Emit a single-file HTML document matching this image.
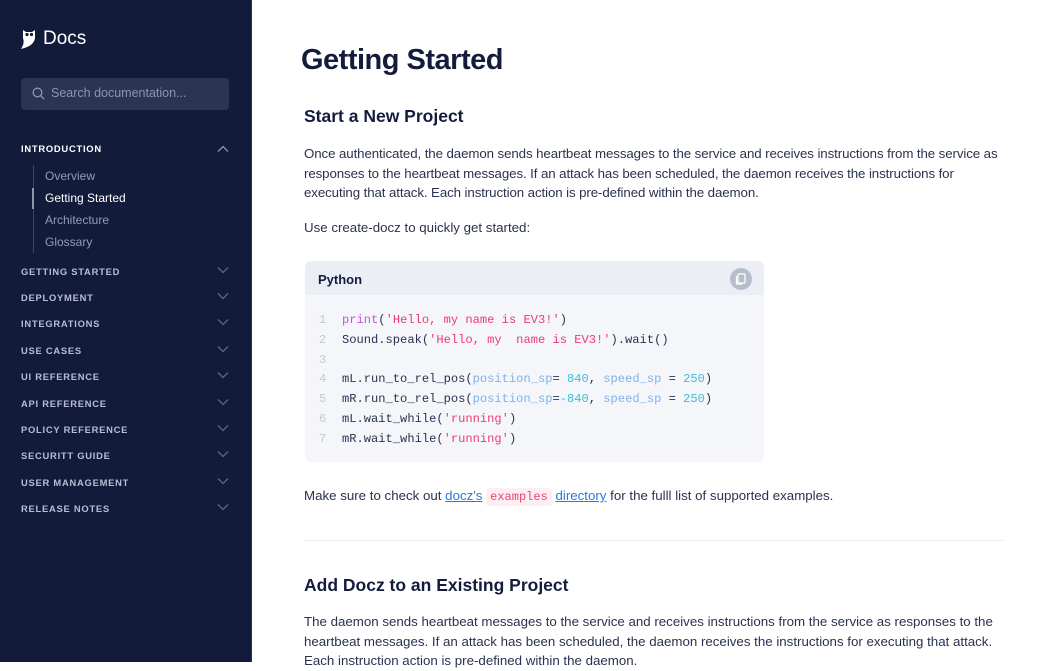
<!DOCTYPE html>
<html><head><meta charset="utf-8"><style>
*{margin:0;padding:0;box-sizing:border-box}
body{width:1050px;height:662px;overflow:hidden;background:#fff;font-family:"Liberation Sans",sans-serif;position:relative}
.sb{position:absolute;left:0;top:0;width:252px;height:662px;background:#131b3b;border-right:1px solid #2a3355}
.logo{position:absolute;left:20px;top:27px;display:flex;align-items:center;color:#fff;font-size:19px}
.search{position:absolute;left:21px;top:78px;width:208px;height:32px;background:#2b3453;border-radius:4px;color:#8d95ad;font-size:12.5px;padding:8px 0 0 30px}
.search svg{position:absolute;left:11px;top:9px}
.sec{position:absolute;left:21px;width:208px;font-size:9.4px;font-weight:bold;letter-spacing:0.75px;color:#b7bed3}
.sec svg{position:absolute;right:0;top:0}
.sub{position:absolute;left:45px;font-size:12px;color:#949cb5}
h1{position:absolute;left:301px;top:44px;font-size:29px;color:#141c3d;letter-spacing:-0.5px}
h2{position:absolute;left:304px;font-size:17.5px;color:#141c3d}
p.t{position:absolute;left:304px;width:705px;font-size:13.3px;line-height:19.7px;color:#2a3250}
.code{position:absolute;left:305px;top:261px;width:459px;height:201px;background:#f4f6fa;border-radius:6px;overflow:hidden}
.ch{height:34px;background:#ebeef4;font-weight:bold;font-size:13px;color:#141c3d;padding:11px 0 0 13px;position:relative}
.cp{position:absolute;right:12px;top:7px;width:22px;height:22px;border-radius:50%;background:#b6bdcc}
pre{font-family:"Liberation Mono",monospace;font-size:12.1px;line-height:19.8px;color:#2a3250;position:absolute;top:50px;left:14px}
.n{color:#c3c8d4;display:inline-block;width:23px}
.s{color:#ec3c6e}.k{color:#c653d8}.a{color:#7fb2ea}.d{color:#3cc0d8}
a{color:#2a7ad9;text-decoration:underline}
.ic{font-family:"Liberation Mono",monospace;font-size:12px;color:#e84673;background:#fdeef2;padding:2px 4px;border-radius:3px}
hr{position:absolute;left:304px;top:540px;width:700px;border:0;border-top:1px solid #eceef3}
</style></head><body>
<div class="sb">
 <div class="logo"><svg width="18" height="24" viewBox="0 0 18 22"><path d="M3 2 L6 4 L12 4 L15 2 L15 10 Q14 18 1 21 Q5 15 3 10 Z" fill="#fff"/><circle cx="7" cy="6.5" r="1.6" fill="#131b3b"/><circle cx="11.5" cy="6.5" r="1.6" fill="#131b3b"/></svg><span style="margin-left:5px">Docs</span></div>
 <div class="search"><svg width="13" height="13" viewBox="0 0 13 13"><circle cx="5.5" cy="5.5" r="4.3" fill="none" stroke="#8d95ad" stroke-width="1.3"/><path d="M8.7 8.7L12 12" stroke="#8d95ad" stroke-width="1.3"/></svg>Search documentation...</div>
 <div class="sec" style="top:143px;color:#fff">INTRODUCTION<svg width="12" height="8" viewBox="0 0 12 8" style="top:2px"><path d="M1 6.5L6 1.5L11 6.5" fill="none" stroke="#8d95ad" stroke-width="1.3"/></svg></div>
 <div style="position:absolute;left:33px;top:165px;width:1px;height:88px;background:#3a4363"></div>
 <div style="position:absolute;left:32px;top:188px;width:2px;height:21px;background:#8d95ad"></div>
 <div class="sub" style="top:169px">Overview</div>
 <div class="sub" style="top:191px;color:#fff">Getting Started</div>
 <div class="sub" style="top:213px">Architecture</div>
 <div class="sub" style="top:235px">Glossary</div>
 <div class="sec" style="top:266px">GETTING STARTED<svg width="12" height="8"><path d="M1 1.5L6 6.5L11 1.5" fill="none" stroke="#5d6686" stroke-width="1.3"/></svg></div>
 <div class="sec" style="top:292px">DEPLOYMENT<svg width="12" height="8"><path d="M1 1.5L6 6.5L11 1.5" fill="none" stroke="#5d6686" stroke-width="1.3"/></svg></div>
 <div class="sec" style="top:318px">INTEGRATIONS<svg width="12" height="8"><path d="M1 1.5L6 6.5L11 1.5" fill="none" stroke="#5d6686" stroke-width="1.3"/></svg></div>
 <div class="sec" style="top:345px">USE CASES<svg width="12" height="8"><path d="M1 1.5L6 6.5L11 1.5" fill="none" stroke="#5d6686" stroke-width="1.3"/></svg></div>
 <div class="sec" style="top:371px">UI REFERENCE<svg width="12" height="8"><path d="M1 1.5L6 6.5L11 1.5" fill="none" stroke="#5d6686" stroke-width="1.3"/></svg></div>
 <div class="sec" style="top:398px">API REFERENCE<svg width="12" height="8"><path d="M1 1.5L6 6.5L11 1.5" fill="none" stroke="#5d6686" stroke-width="1.3"/></svg></div>
 <div class="sec" style="top:424px">POLICY REFERENCE<svg width="12" height="8"><path d="M1 1.5L6 6.5L11 1.5" fill="none" stroke="#5d6686" stroke-width="1.3"/></svg></div>
 <div class="sec" style="top:450px">SECURITT GUIDE<svg width="12" height="8"><path d="M1 1.5L6 6.5L11 1.5" fill="none" stroke="#5d6686" stroke-width="1.3"/></svg></div>
 <div class="sec" style="top:477px">USER MANAGEMENT<svg width="12" height="8"><path d="M1 1.5L6 6.5L11 1.5" fill="none" stroke="#5d6686" stroke-width="1.3"/></svg></div>
 <div class="sec" style="top:503px">RELEASE NOTES<svg width="12" height="8"><path d="M1 1.5L6 6.5L11 1.5" fill="none" stroke="#5d6686" stroke-width="1.3"/></svg></div>
</div>
<h1>Getting Started</h1>
<h2 style="top:106px">Start a New Project</h2>
<p class="t" style="top:144px;width:700px;letter-spacing:-0.1px">Once authenticated, the daemon sends heartbeat messages to the service and receives instructions from the service as responses to the heartbeat messages. If an attack has been scheduled, the daemon receives the instructions for executing that attack. Each instruction action is pre-defined within the daemon.</p>
<p class="t" style="top:218px">Use create-docz to quickly get started:</p>
<div class="code"><div class="ch">Python<div class="cp"><svg width="22" height="22" viewBox="0 0 22 22"><rect x="8" y="6" width="7" height="9" rx="1" fill="none" stroke="#fff" stroke-width="1.3"/><path d="M6.5 8v8h6" fill="none" stroke="#fff" stroke-width="1.3"/></svg></div></div>
<pre><span class="n">1</span><span class="k">print</span>(<span class="s">'Hello, my name is EV3!'</span>)
<span class="n">2</span>Sound.speak(<span class="s">'Hello, my  name is EV3!'</span>).wait()
<span class="n">3</span>
<span class="n">4</span>mL.run_to_rel_pos(<span class="a">position_sp</span>= <span class="d">840</span>, <span class="a">speed_sp</span> = <span class="d">250</span>)
<span class="n">5</span>mR.run_to_rel_pos(<span class="a">position_sp</span>=<span class="d">-840</span>, <span class="a">speed_sp</span> = <span class="d">250</span>)
<span class="n">6</span>mL.wait_while(<span class="s">'running'</span>)
<span class="n">7</span>mR.wait_while(<span class="s">'running'</span>)</pre></div>
<p class="t" style="top:486px">Make sure to check out <a>docz's</a> <span class="ic">examples</span> <a>directory</a> for the fulll list of supported examples.</p>
<hr>
<h2 style="top:575px">Add Docz to an Existing Project</h2>
<p class="t" style="top:612px;width:690px">The daemon sends heartbeat messages to the service and receives instructions from the service as responses to the heartbeat messages. If an attack has been scheduled, the daemon receives the instructions for executing that attack. Each instruction action is pre-defined within the daemon.</p>
</body></html>
